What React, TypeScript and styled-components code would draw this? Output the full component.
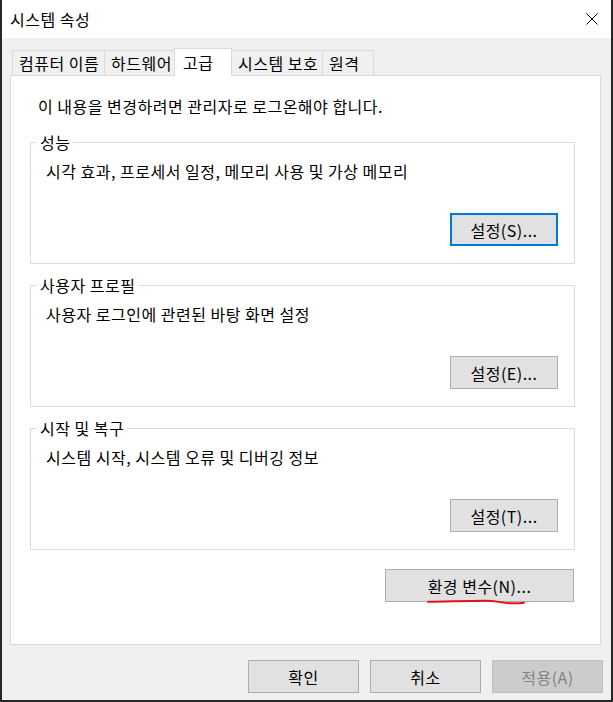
import React from 'react';
import styled, { createGlobalStyle } from 'styled-components';

const GlobalStyle = createGlobalStyle`
  html, body {
    margin: 0;
    padding: 0;
    background: #262626;
  }
  body {
    font-family: "Noto Sans CJK KR", "Noto Sans", sans-serif;
    font-size: 16px;
    letter-spacing: 0.5px;
    color: #000;
  }
`;

const Window = styled.div`
  margin-left: 2px;
  width: 609px;
  height: 700px;
  background: #f0f0f0;
  display: flex;
  flex-direction: column;
`;

const TitleBar = styled.header`
  flex: none;
  box-sizing: border-box;
  height: 38px;
  background: #fff;
  display: flex;
  align-items: center;
  justify-content: space-between;
  padding: 0 13px 0 8px;
`;

const Title = styled.span`
  line-height: 20px;
`;

const Body = styled.div`
  flex: 1;
  display: flex;
  flex-direction: column;
  padding: 10px 10px 0 8px;
`;

const TabStrip = styled.div`
  display: flex;
  align-items: flex-end;
  height: 27px;
  padding-left: 2px;
`;

const Tab = styled.div<{ $w: number; $active?: boolean }>`
  box-sizing: border-box;
  position: relative;
  z-index: ${({ $active }) => ($active ? 2 : 1)};
  width: ${({ $w }) => $w}px;
  height: ${({ $active }) => ($active ? 28 : 25)}px;
  margin-right: -1px;
  margin-bottom: ${({ $active }) => ($active ? -1 : 0)}px;
  padding: 0 0 ${({ $active }) => ($active ? 1 : 0)}px ${({ $active }) => ($active ? 8 : 6)}px;
  border: 1px solid #d9d9d9;
  border-bottom: none;
  background: ${({ $active }) => ($active ? '#fff' : '#f0f0f0')};
  display: flex;
  align-items: center;
  line-height: 20px;
  white-space: nowrap;
`;

const Panel = styled.div`
  flex: none;
  box-sizing: border-box;
  height: 570px;
  background: #fff;
  border: 1px solid #d9d9d9;
  padding: 20px 25px 0 19px;
  display: flex;
  flex-direction: column;
`;

const Intro = styled.p`
  margin: 0 0 18px 8px;
  line-height: 20px;
`;

const Group = styled.fieldset`
  margin: 0;
  padding: 0;
  min-width: 0;
  border: 1px solid #dcdcdc;

  & + & {
    margin-top: 13px;
  }
`;

const Legend = styled.legend`
  margin-left: 5px;
  padding: 0 3px 0 4px;
  line-height: 16px;
`;

const GroupText = styled.div`
  margin-top: 11px;
  padding-left: 15px;
  line-height: 20px;
`;

const GroupActions = styled.div`
  display: flex;
  justify-content: flex-end;
  margin: 32px 0 17px;
  padding-right: 16px;
`;

const Button = styled.button<{ $w: number; $focused?: boolean }>`
  box-sizing: border-box;
  width: ${({ $w }) => $w}px;
  height: 33px;
  padding: 0;
  font-family: inherit;
  font-size: 16px;
  letter-spacing: inherit;
  line-height: 20px;
  color: #000;
  background: #e1e1e1;
  border: ${({ $focused }) => ($focused ? '2px solid #0078d7' : '1px solid #adadad')};
  outline: none;

  &:disabled {
    color: #838383;
    background: #cccccc;
    border-color: #bfbfbf;
  }
`;

const EnvRow = styled.div`
  display: flex;
  justify-content: flex-end;
  margin-top: 19px;
  padding-right: 1px;
`;

const Marked = styled.div`
  position: relative;
`;

const Scribble = styled.svg`
  position: absolute;
  left: 40px;
  top: 28px;
  pointer-events: none;
`;

const Footer = styled.div`
  display: flex;
  justify-content: flex-end;
  gap: 11px;
  margin: 15px -2px 0 0;
`;

const tabs = [
  { label: '컴퓨터 이름', w: 93 },
  { label: '하드웨어', w: 71 },
  { label: '고급', w: 58, active: true },
  { label: '시스템 보호', w: 92 },
  { label: '원격', w: 52 },
];

const groups = [
  { title: '성능', text: '시각 효과, 프로세서 일정, 메모리 사용 및 가상 메모리', button: '설정(S)...', focused: true },
  { title: '사용자 프로필', text: '사용자 로그인에 관련된 바탕 화면 설정', button: '설정(E)...' },
  { title: '시작 및 복구', text: '시스템 시작, 시스템 오류 및 디버깅 정보', button: '설정(T)...' },
];

export default function App() {
  return (
    <>
      <GlobalStyle />
      <Window>
        <TitleBar>
          <Title>시스템 속성</Title>
          <svg width="12" height="12" viewBox="0 0 12 12">
            <path d="M0.5 0.5 L11.5 11.5 M11.5 0.5 L0.5 11.5" stroke="#000" strokeWidth="1" fill="none" />
          </svg>
        </TitleBar>
        <Body>
          <TabStrip>
            {tabs.map((t) => (
              <Tab key={t.label} $w={t.w} $active={t.active}>
                {t.label}
              </Tab>
            ))}
          </TabStrip>
          <Panel>
            <Intro>이 내용을 변경하려면 관리자로 로그온해야 합니다.</Intro>
            {groups.map((g) => (
              <Group key={g.title}>
                <Legend>{g.title}</Legend>
                <GroupText>{g.text}</GroupText>
                <GroupActions>
                  <Button $w={108} $focused={g.focused}>
                    {g.button}
                  </Button>
                </GroupActions>
              </Group>
            ))}
            <EnvRow>
              <Marked>
                <Button $w={189}>환경 변수(N)...</Button>
                <Scribble width="104" height="10" viewBox="0 0 104 10">
                  <path
                    d="M3 4.8 C 20 4.6, 45 3.8, 60 3.8 C 72 3.8, 78 6.2, 88 6.3 C 94 6.3, 97 6, 99 5.7"
                    stroke="#e3121b"
                    strokeWidth="2"
                    strokeLinecap="round"
                    fill="none"
                  />
                </Scribble>
              </Marked>
            </EnvRow>
          </Panel>
          <Footer>
            <Button $w={111}>확인</Button>
            <Button $w={111}>취소</Button>
            <Button $w={111} disabled>
              적용(A)
            </Button>
          </Footer>
        </Body>
      </Window>
    </>
  );
}
